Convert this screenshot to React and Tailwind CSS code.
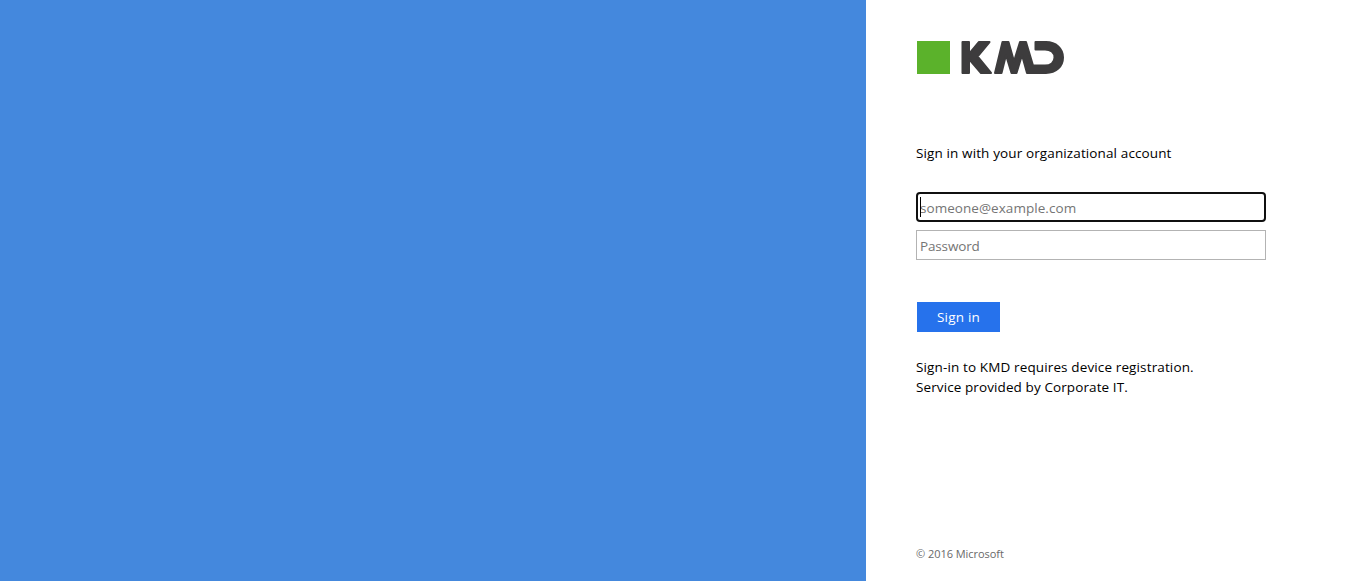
function Logo() {
  return (
    <svg className="block h-[35px] w-[149px]" viewBox="0 0 149 35" role="img" aria-label="KMD">
      <rect x="1" y="1" width="33" height="33" fill="#5bb22b" />
      <g fill="#3d3c3d" stroke="#3d3c3d" strokeWidth="2" strokeLinejoin="round">
        <path d="M46.500 2H53V14L63 2H73.500L61.500 16.500L75 33H65L53 19V33H46.500Z" />
        <path d="M86.500 2H92.500L98 21.500L104 2H110L117 25.6H129C134.5 25.6 138.5 22.5 138.5 17.5S134.5 9.4 129 9.4H119.500V2H130C140 2 147 8.5 147 17.5S140 33 130 33H111L106 15L100.500 33H95.500L90 15L85.500 33H79Z" />
      </g>
    </svg>
  );
}

export default function App() {
  return (
    <div className="flex h-[581px] w-full overflow-hidden bg-white font-['Open_Sans','Noto_Sans',sans-serif] text-[13.5px] leading-5 text-black">
      <div className="flex-1 bg-[#4488dd]" />
      <main className="flex w-[500px] flex-col items-start pt-10 pr-[100px] pb-[17px] pl-[50px]">
        <Logo />
        <p className="mt-[68px]"><span className="tracking-[0.12px]">Sign in with your organizational account</span></p>
        <form className="mt-[29px] flex w-full flex-col items-start" onSubmit={(e) => e.preventDefault()}>
          <div className="relative w-full">
            <input className="block h-[30px] w-full rounded-[4px] border-2 border-[#101010] px-0.5 pt-0.5 tracking-[0.05px] caret-transparent outline-none placeholder:text-[#757575]" placeholder="someone@example.com" />
            <span className="absolute top-[5px] left-1 h-5 w-px bg-black" />
          </div>
          <input type="password" className="mt-2 block h-[30px] w-full border border-[#b3b3b3] px-[3px] pt-0.5 tracking-[-0.15px] outline-none placeholder:text-[#757575]" placeholder="Password" />
          <button className="mt-[42px] ml-px h-[30px] w-[83px] bg-[#2672ec] tracking-[0.2px] text-white">Sign in</button>
        </form>
        <p className="mt-[25px]">
          <span className="tracking-[0.13px]">Sign-in to KMD requires device registration.</span><br />
          <span className="tracking-[0.1px]">Service provided by Corporate IT.</span>
        </p>
        <footer className="mt-auto text-[11px] tracking-[-0.05px] text-[#696969]"><span>© 2016 Microsoft</span></footer>
      </main>
    </div>
  );
}
